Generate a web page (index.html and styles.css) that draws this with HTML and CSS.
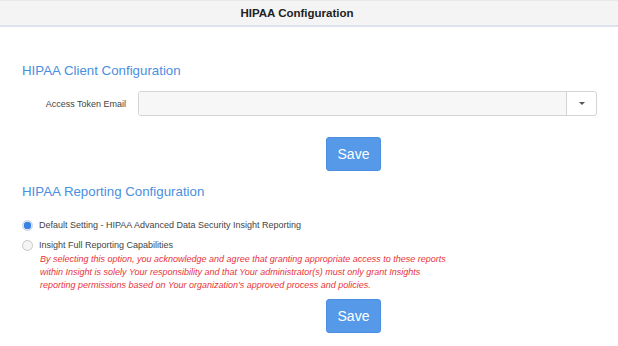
FILE: index.html
```html
<!DOCTYPE html>
<html>
<head>
  <meta charset="utf-8">
  <link rel="stylesheet" href="styles.css">
</head>
<body>
  <div class="header">
    <h1>HIPAA Configuration</h1>
  </div>

  <div class="content">
    <h2 class="section-title">HIPAA Client Configuration</h2>

    <div class="form-row">
      <label class="form-label">Access Token Email</label>
      <div class="select-box">
        <div class="select-value"></div>
        <div class="select-toggle"><span class="caret"></span></div>
      </div>
    </div>

    <div class="actions">
      <button class="button">Save</button>
    </div>

    <h2 class="section-title second">HIPAA Reporting Configuration</h2>

    <div class="radio-row">
      <span class="radio checked"></span>
      <span class="radio-label">Default Setting - HIPAA Advanced Data Security Insight Reporting</span>
    </div>
    <div class="radio-row">
      <span class="radio"></span>
      <span class="radio-label">Insight Full Reporting Capabilities</span>
    </div>
    <p class="warning">By selecting this option, you acknowledge and agree that granting appropriate access to these reports<br>within Insight is solely Your responsibility and that Your administrator(s) must only grant Insights<br>reporting permissions based on Your organization’s approved process and policies.</p>

    <div class="actions">
      <button class="button">Save</button>
    </div>
  </div>
</body>
</html>
```

FILE: styles.css
```css
body {
  margin: 0;
  font-family: "Liberation Sans", Arial, sans-serif;
  background: #ffffff;
  color: #333333;
}

.header {
  height: 25px;
  display: flex;
  justify-content: center;
  align-items: center;
  padding-right: 24px;
  background: #f4f4f4;
  border-bottom: 2px solid #dde3ec;
  box-shadow: inset 0 1px 0 #e8e8e8;
}

h1 {
  margin: 0;
  font-size: 11.5px;
  font-weight: bold;
  color: #222222;
}

.content {
  padding: 36px 21px 0 22px;
}

.section-title {
  margin: 0;
  font-size: 13.3px;
  font-weight: normal;
  color: #4a8fe0;
  line-height: 16px;
}

.section-title.second {
  margin-top: 13px;
}

.form-row {
  display: flex;
  align-items: center;
  margin-top: 12px;
}

.form-label {
  width: 104px;
  padding-right: 12px;
  text-align: right;
  font-size: 9px;
  color: #444444;
}

.select-box {
  flex: 1;
  display: flex;
  height: 23px;
  border: 1px solid #d4d4d4;
  border-radius: 3px;
  background: #ffffff;
  overflow: hidden;
}

.select-value {
  flex: 1;
  background: #f7f7f7;
}

.select-toggle {
  width: 29px;
  border-left: 1px solid #d4d4d4;
  display: flex;
  justify-content: center;
  align-items: center;
}

.caret {
  width: 0;
  height: 0;
  border-left: 3px solid transparent;
  border-right: 3px solid transparent;
  border-top: 3px solid #555555;
}

.actions {
  padding-left: 304px;
  margin-top: 21px;
}

.button {
  width: 55px;
  height: 34px;
  background: #5599e8;
  color: #ffffff;
  border: 1px solid #4a8fe0;
  border-radius: 3px;
  font-family: "Liberation Sans", Arial, sans-serif;
  font-size: 14px;
  padding: 0;
}

.radio-row {
  display: flex;
  align-items: center;
  height: 20px;
}

.section-title.second + .radio-row {
  margin-top: 15px;
}

.radio {
  width: 11px;
  height: 11px;
  border: 1px solid #c8c8c8;
  border-radius: 50%;
  background: #f4f4f4;
  margin-right: 6px;
  box-sizing: border-box;
}

.radio.checked {
  background: radial-gradient(circle, #3b82e6 0 3.5px, #dbe6f5 4px);
  border-color: #c8d4e4;
}

.radio-label {
  font-size: 9px;
  color: #444444;
}

.warning {
  margin: -2px 0 0 18px;
  font-size: 9px;
  font-style: italic;
  line-height: 13px;
  color: #e8333a;
}

.warning + .actions {
  margin-top: 7px;
}
```
